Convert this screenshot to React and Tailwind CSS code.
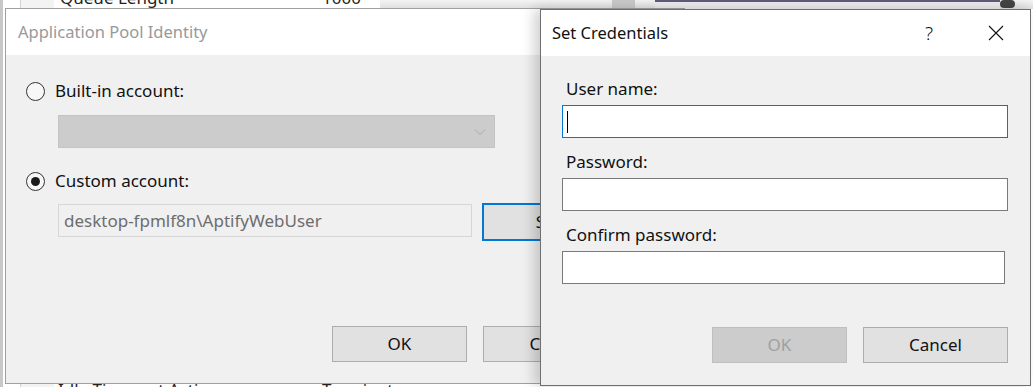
const font = { fontFamily: '"Noto Sans", "Open Sans", sans-serif' };

const Radio = ({ checked }) => (
  <span className="flex h-[19px] w-[19px] items-center justify-center rounded-full border border-[#333] bg-[#f7f7f7]">
    {checked && <span className="h-[9px] w-[9px] rounded-full bg-[#1a1a1a]" />}
  </span>
);

const Chevron = () => (
  <svg width="12" height="8" viewBox="0 0 12 8" fill="none">
    <path d="M1 1.5L6 6.5L11 1.5" stroke="#a8a8a8" strokeWidth="1" />
  </svg>
);

const CloseIcon = () => (
  <svg width="16" height="16" viewBox="0 0 16 16" fill="none">
    <path d="M1 1L15 15M15 1L1 15" stroke="#111" strokeWidth="1.1" />
  </svg>
);

const Background = () => (
  <div className="absolute inset-0 bg-white">
    <div className="absolute left-0 top-0 h-full w-[3px] bg-[#c8c8c8]" />
    <div className="absolute left-[20px] top-0 h-full w-[34px] border-l border-[#d0d0d0] bg-[#f3f3f3]" />
    <div className="absolute right-0 top-0 flex h-[9px] w-[653px] bg-gradient-to-b from-[#f4f4f4] to-[#dedede]">
      <div className="ml-[232px] h-full w-[23px] bg-[#c9c9c9]" />
      <div className="ml-[20px] h-full flex-1 border-t-2 border-[#5c5c7a] bg-[#ececec]" />
      <div className="mr-[18px] h-[8px] w-[15px] rounded-sm bg-[#444]" />
    </div>
    <div className="absolute left-[60px] top-[-15px] flex w-[400px] text-[17px] text-[#222]">
      <span className="w-[262px]">Queue Length</span>
      <span>1000</span>
    </div>
    <div className="absolute left-[58px] top-[377px] flex w-[400px] text-[17px] text-[#222]">
      <span className="w-[264px]">Idle Time-out Action</span>
      <span>Terminate</span>
    </div>
  </div>
);

const PoolDialog = () => (
  <div className="absolute left-[5px] top-[8px] flex h-[376px] w-[680px] flex-col border border-[#a0a0a0] bg-[#f0f0f0]">
    <div className="flex h-[46px] items-center bg-white pl-[12px] text-[16.5px] text-[#999]">
      Application Pool Identity
    </div>
    <div className="flex flex-col pl-[20px] pt-[26px] text-[17px] text-[#111]">
      <div className="flex h-[20px] items-center gap-[10px]">
        <Radio />
        <span>Built-in account:</span>
      </div>
      <div className="ml-[32px] mt-[14px] flex h-[33px] w-[437px] items-center justify-end border border-[#c4c4c4] bg-[#cccccc] pr-[8px]">
        <Chevron />
      </div>
      <div className="mt-[23px] flex h-[20px] items-center gap-[10px]">
        <Radio checked />
        <span>Custom account:</span>
      </div>
      <div className="ml-[32px] mt-[12px] flex items-start gap-[10px]">
        <div className="mt-[1px] flex h-[33px] w-[414px] shrink-0 items-center border border-[#d6d6d6] bg-[#f0f0f0] pl-[5px] text-[#6d6d6d]">
          desktop-fpmlf8n\AptifyWebUser
        </div>
        <div className="flex h-[38px] w-[146px] shrink-0 items-center justify-center border-2 border-[#0078d7] bg-[#e1e1e1]">
          Set...
        </div>
      </div>
      <div className="ml-[306px] mt-[85px] flex gap-[16px]">
        <div className="flex h-[36px] w-[135px] shrink-0 items-center justify-center border border-[#adadad] bg-[#e1e1e1]">
          OK
        </div>
        <div className="flex h-[36px] w-[146px] shrink-0 items-center justify-center border border-[#adadad] bg-[#e1e1e1]">
          Cancel
        </div>
      </div>
    </div>
  </div>
);

const Field = ({ focused, narrow }) => (
  <div
    className={`mt-[6px] flex h-[33px] items-center bg-white pl-[4px] ${
      focused ? "border border-[#0078d7]" : "border border-[#7a7a7a]"
    } ${narrow ? "w-[443px]" : "w-[446px]"}`}
  >
    {focused && <span className="h-[22px] w-[1px] bg-black" />}
  </div>
);

const CredentialsDialog = () => (
  <div className="absolute left-[540px] top-[9px] flex h-[377px] w-[491px] flex-col border border-[#6f6f6f] bg-[#f0f0f0] shadow-[-6px_0_12px_rgba(0,0,0,0.18)]">
    <div className="flex h-[46px] items-center bg-white pl-[11px] pr-[26px] text-[16.5px] text-[#111]">
      <span className="flex-1">Set Credentials</span>
      <span className="mr-[55px] text-[19px] font-light">?</span>
      <CloseIcon />
    </div>
    <div className="flex flex-col pl-[21px] pt-[23px] text-[17px] text-[#111]">
      <span className="ml-[4px] h-[20px] leading-[20px]">User name:</span>
      <Field focused />
      <span className="ml-[4px] mt-[14px] h-[20px] leading-[20px]">Password:</span>
      <Field />
      <span className="ml-[4px] mt-[14px] h-[20px] leading-[20px]">Confirm password:</span>
      <Field narrow />
      <div className="ml-[150px] mt-[43px] flex gap-[16px]">
        <div className="flex h-[36px] w-[135px] items-center justify-center border border-[#bfbfbf] bg-[#cccccc] text-[#a0a0a0]">
          OK
        </div>
        <div className="flex h-[36px] w-[145px] items-center justify-center border border-[#adadad] bg-[#e1e1e1]">
          Cancel
        </div>
      </div>
    </div>
  </div>
);

export default function App() {
  return (
    <div className="relative h-[387px] w-[1033px] overflow-hidden" style={font}>
      <Background />
      <PoolDialog />
      <CredentialsDialog />
    </div>
  );
}
